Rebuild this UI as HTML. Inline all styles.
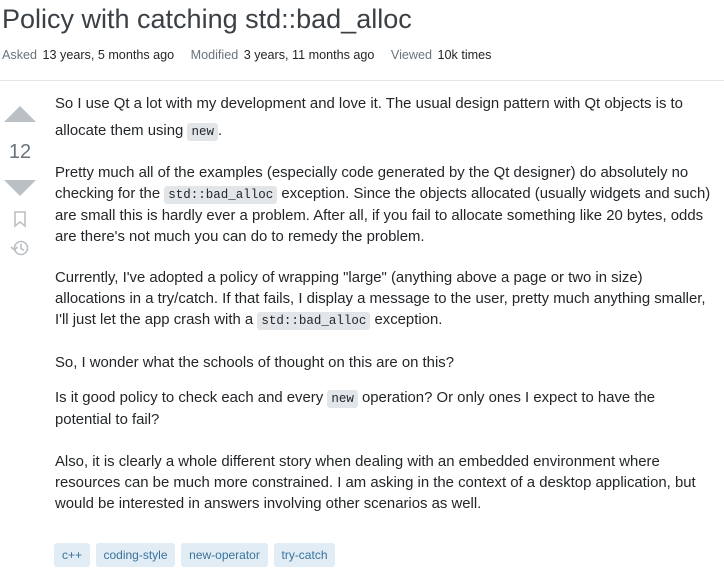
<!DOCTYPE html>
<html><head><meta charset="utf-8"><style>
body{margin:0;width:724px;height:574px;background:#fff;font-family:"Liberation Sans",Arial,sans-serif;color:#232629;position:relative;overflow:hidden}
h1{position:absolute;left:2px;top:4px;margin:0;font-weight:normal;font-size:27px;color:#3b4045;white-space:nowrap}
.meta{position:absolute;left:2px;top:48px;font-size:12.6px;color:#6a737c;white-space:nowrap}
.meta b{font-weight:normal;color:#232629;margin-right:13px;margin-left:2px}
.hr{position:absolute;left:0;top:80px;width:724px;height:1px;background:#e3e6e8}
p{position:absolute;left:55px;margin:0;font-size:14.9px;line-height:21px;white-space:nowrap}
code{font-family:"Liberation Mono",monospace;font-size:12.5px;background:#e3e6e8;padding:2px 4px;border-radius:3px}
.tag{position:absolute;top:543px;height:24px;line-height:24px;background:#e1ecf4;color:#39739d;font-size:12px;border-radius:3px;text-align:center}
</style></head><body>
<h1>Policy with catching std::bad_alloc</h1>
<div class="meta">Asked <b>13 years, 5 months ago</b> Modified <b>3 years, 11 months ago</b> Viewed <b>10k times</b></div>
<div class="hr"></div>
<svg style="position:absolute;left:0;top:100px" width="40" height="170">
<polygon points="4,22 36,22 20,6" fill="#bbc0c4"/>
<text x="20" y="58" text-anchor="middle" font-family="Liberation Sans" font-size="20" fill="#6a737c">12</text>
<polygon points="4,80 36,80 20,96" fill="#bbc0c4"/>
<path d="M15 112 h10 v14 l-5 -4 l-5 4 z" fill="none" stroke="#bbc0c4" stroke-width="1.6"/>
<circle cx="21" cy="148" r="6.5" fill="none" stroke="#bbc0c4" stroke-width="1.6"/>
<path d="M21 144 v4.5 l3 2" fill="none" stroke="#bbc0c4" stroke-width="1.6"/>
<path d="M11 147 l3.5 3 l3 -3" fill="none" stroke="#bbc0c4" stroke-width="1.6"/>
</svg>
<p style="top:94px">So I use Qt a lot with my development and love it. The usual design pattern with Qt objects is to</p>
<p style="top:121px">allocate them using <code>new</code>.</p>
<p style="top:163px;line-height:21px">Pretty much all of the examples (especially code generated by the Qt designer) do absolutely no<br>checking for the <code>std::bad_alloc</code> exception. Since the objects allocated (usually widgets and such)<br>are small this is hardly ever a problem. After all, if you fail to allocate something like 20 bytes, odds<br>are there's not much you can do to remedy the problem.</p>
<p style="top:268px">Currently, I've adopted a policy of wrapping "large" (anything above a page or two in size)<br>allocations in a try/catch. If that fails, I display a message to the user, pretty much anything smaller,<br>I'll just let the app crash with a <code>std::bad_alloc</code> exception.</p>
<p style="top:353px">So, I wonder what the schools of thought on this are on this?</p>
<p style="top:388px">Is it good policy to check each and every <code>new</code> operation? Or only ones I expect to have the<br>potential to fail?</p>
<p style="top:452px">Also, it is clearly a whole different story when dealing with an embedded environment where<br>resources can be much more constrained. I am asking in the context of a desktop application, but<br>would be interested in answers involving other scenarios as well.</p>
<div class="tag" style="left:54px;width:36px">c++</div>
<div class="tag" style="left:96px;width:79px">coding-style</div>
<div class="tag" style="left:181px;width:87px">new-operator</div>
<div class="tag" style="left:274px;width:61px">try-catch</div>
</body></html>
